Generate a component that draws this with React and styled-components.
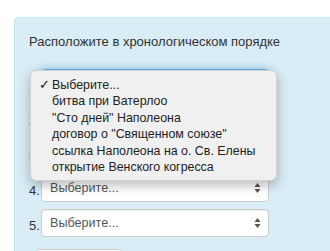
import React from "react";
import styled, { createGlobalStyle } from "styled-components";

const GlobalStyle = createGlobalStyle`
  html, body {
    margin: 0;
    padding: 0;
    background: #fff;
    overflow: hidden;
  }
  body {
    font-family: "Liberation Sans", Arial, sans-serif;
    font-size: 13px;
    color: #333;
  }
`;

const Panel = styled.div`
  margin: 17px 0 0 14px;
  width: 340px;
  min-height: 260px;
  box-sizing: border-box;
  padding: 15px 14px 20px;
  background: #d9edf7;
  border: 1px solid #c9e4f1;
  border-radius: 4px;
`;

const Title = styled.div`
  font-size: 13px;
  line-height: 18px;
  color: #333;
  margin-bottom: 18px;
`;

const Form = styled.div`
  position: relative;
  display: flex;
  flex-direction: column;
  gap: 7px;
  width: 240px;
`;

const Row = styled.div`
  display: flex;
  align-items: flex-end;
`;

const Num = styled.span`
  width: 12px;
  line-height: 16px;
  padding-bottom: 3px;
  color: #333;
`;

const Select = styled.div`
  position: relative;
  width: 228px;
  height: 28px;
  box-sizing: border-box;
  padding-left: 8px;
  display: flex;
  align-items: center;
  background: #fff;
  border: 1px solid ${({ $focus }) => ($focus ? "#66afe9" : "#ccc")};
  border-radius: 4px;
  box-shadow: ${({ $focus }) =>
    $focus
      ? "inset 0 1px 1px rgba(0,0,0,.075), 0 0 8px rgba(102,175,233,.6)"
      : "inset 0 1px 1px rgba(0,0,0,.075)"};
  color: #555;
  font-size: 12.6px;
`;

const Arrows = styled.svg`
  position: absolute;
  right: 7px;
  top: 50%;
  margin-top: -6px;
`;

const Menu = styled.div`
  position: absolute;
  top: 1px;
  left: 1px;
  width: 247px;
  box-sizing: border-box;
  padding: 6px 0 5px;
  background: #f0f0f0;
  border: 1px solid rgba(0, 0, 0, 0.12);
  border-radius: 6px;
  box-shadow: 0 4px 12px rgba(0, 0, 0, 0.28);
`;

const Item = styled.div`
  display: flex;
  align-items: baseline;
  line-height: 16.4px;
  font-size: 12.4px;
  color: #222;
  white-space: nowrap;
`;

const Mark = styled.span`
  width: 21px;
  box-sizing: border-box;
  padding-left: 8px;
  font-family: "DejaVu Sans", sans-serif;
  font-weight: bold;
  font-size: 13px;
  color: #111;
`;

const Button = styled.div`
  margin: 12px 0 0 6px;
  width: 85px;
  height: 30px;
  background: #fff;
  border: 1px solid #ccc;
  border-radius: 4px;
`;

const options = [
  "Выберите...",
  "битва при Ватерлоо",
  "\"Сто дней\" Наполеона",
  "договор о \"Священном союзе\"",
  "ссылка Наполеона на о. Св. Елены",
  "открытие Венского когресса",
];

const SelectBox = ({ focus }) => (
  <Select $focus={focus}>
    Выберите...
    <Arrows width="7" height="12" viewBox="0 0 7 12">
      <path d="M3.5 1 L6.5 5 L0.5 5 Z" fill="#555" />
      <path d="M3.5 11 L6.5 7 L0.5 7 Z" fill="#555" />
    </Arrows>
  </Select>
);

export default function App() {
  return (
    <>
      <GlobalStyle />
      <Panel>
        <Title>Расположите в хронологическом порядке</Title>
        <Form>
          {[1, 2, 3, 4, 5].map((n) => (
            <Row key={n}>
              <Num>{n}.</Num>
              <SelectBox focus={n === 1} />
            </Row>
          ))}
          <Menu>
            {options.map((o, i) => (
              <Item key={o}>
                <Mark>{i === 0 ? "✓" : ""}</Mark>
                {o}
              </Item>
            ))}
          </Menu>
        </Form>
        <Button />
      </Panel>
    </>
  );
}
